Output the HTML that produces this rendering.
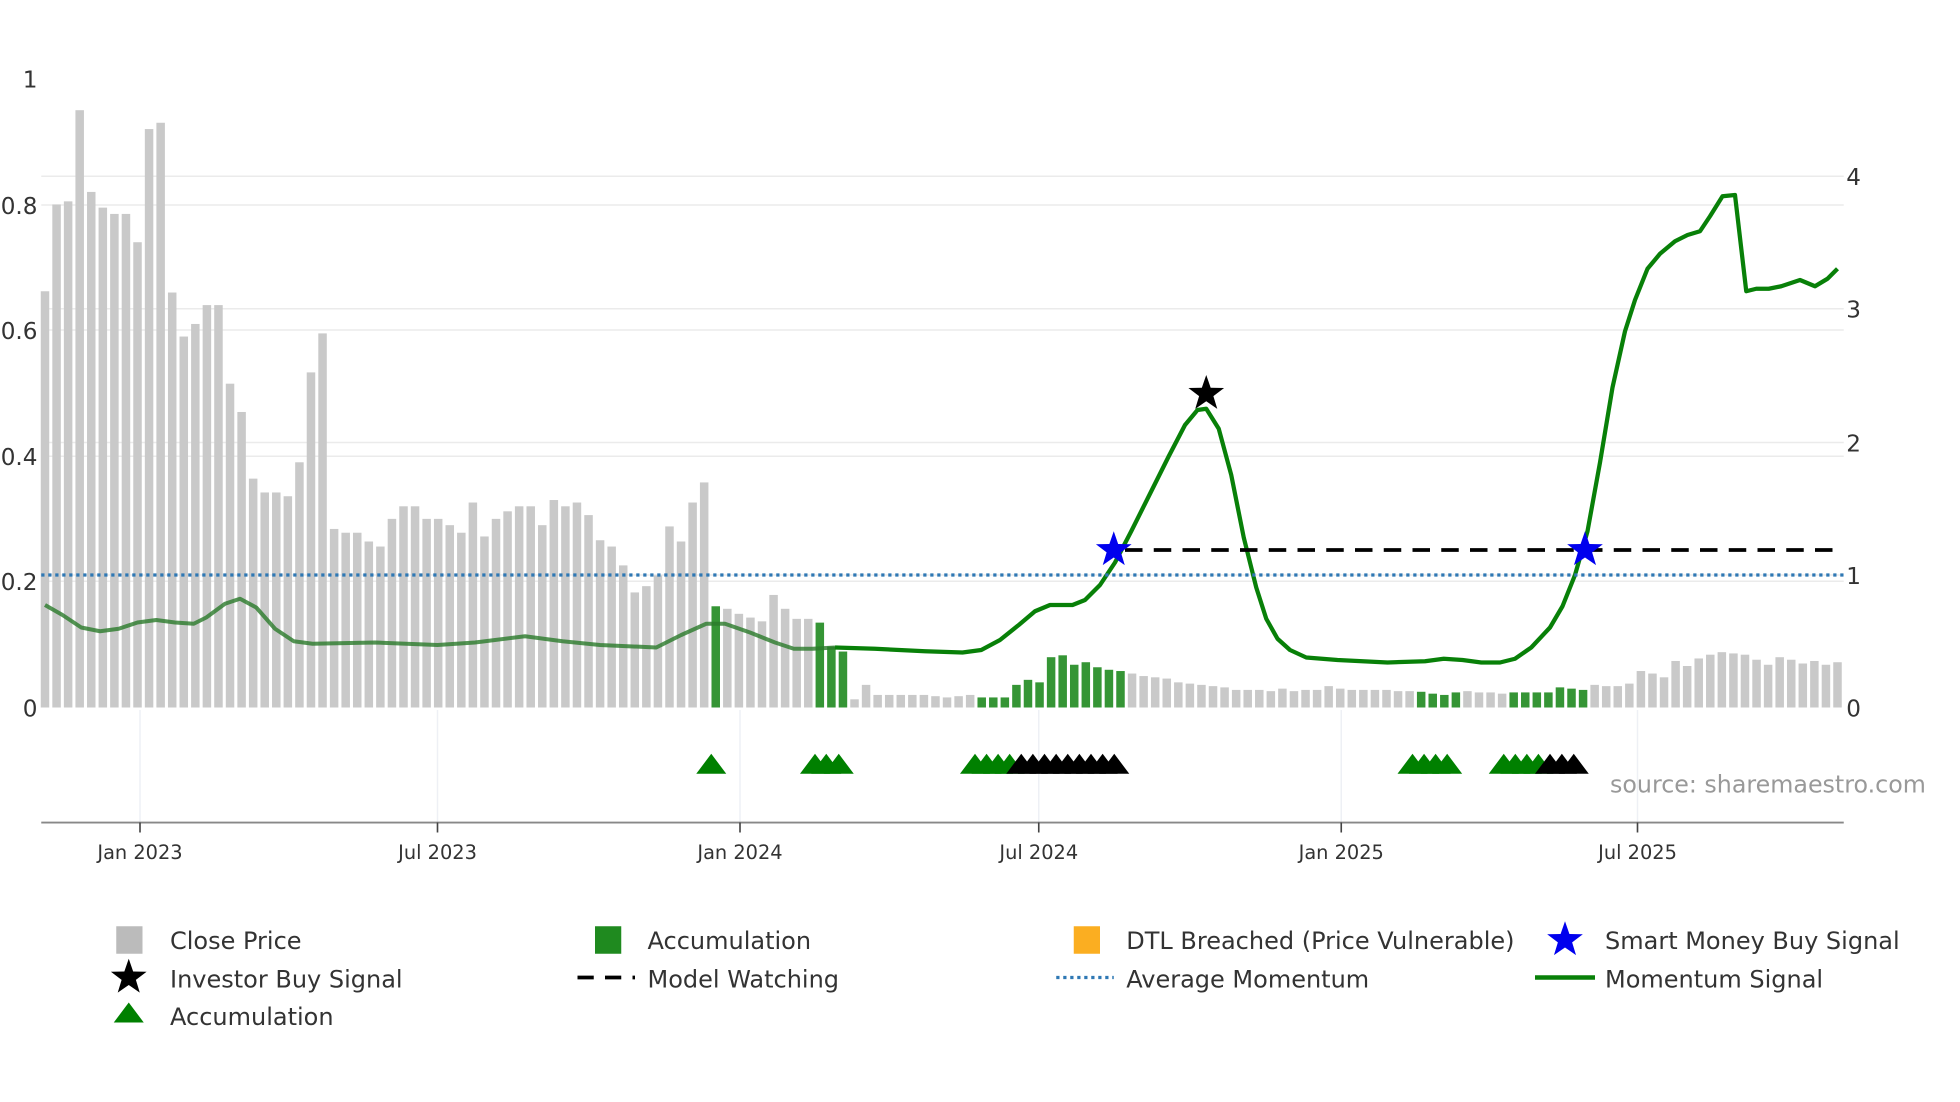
<!DOCTYPE html>
<html><head><meta charset="utf-8"><style>
html,body{margin:0;padding:0;background:#fff;}
svg{display:block;font-family:"DejaVu Sans","Liberation Sans",sans-serif;}
</style></head><body>
<svg id="c" width="1960" height="1102" viewBox="0 0 1568 881.6" xmlns="http://www.w3.org/2000/svg">
<g stroke="#ebebeb" stroke-width="1.2">
<line x1="33" x2="1475" y1="465" y2="465"/><line x1="33" x2="1475" y1="365" y2="365"/>
<line x1="33" x2="1475" y1="264" y2="264"/><line x1="33" x2="1475" y1="164" y2="164"/>
<line x1="33" x2="1475" y1="460" y2="460"/><line x1="33" x2="1475" y1="354" y2="354"/>
<line x1="33" x2="1475" y1="247" y2="247"/><line x1="33" x2="1475" y1="141" y2="141"/>
</g>
<g stroke="#eef0f5" stroke-width="1.2">
<line x1="112" x2="112" y1="568" y2="658"/><line x1="350" x2="350" y1="568" y2="658"/>
<line x1="592" x2="592" y1="568" y2="658"/><line x1="831" x2="831" y1="568" y2="658"/>
<line x1="1073" x2="1073" y1="568" y2="658"/><line x1="1310" x2="1310" y1="568" y2="658"/>
</g>
<g id="bars"></g>
<polyline fill="none" stroke="#2a7a2a" stroke-opacity="0.8" stroke-width="3.2" stroke-linejoin="round" points="36,484 50,492 65,502 80,505 95,503 110,498 125,496 140,498 155,499 165,494 180,483 192,479 205,486 220,503 235,513 250,515 300,514 350,516 380,514 420,509 450,513 480,516 525,518 545,508 565,499 580,499 600,506 620,514 635,519 650,519 668,518"/>
<polyline fill="none" stroke="#088008" stroke-width="3.4" stroke-linejoin="round" points="668,518 700,519 740,521 770,522 785,520 800,512 815,500 828,489 840,484 858,484 868,480 880,468 892,450 905,425 920,395 935,365 948,340 958,328 965,327 975,343 985,380 995,430 1005,470 1013,495 1022,511 1032,520 1045,526 1070,528 1110,530 1140,529 1155,527 1170,528 1185,530 1200,530 1212,527 1225,518 1240,502 1250,485 1260,460 1270,425 1280,370 1290,310 1300,265 1308,240 1318,215 1328,203 1340,193 1350,188 1360,185 1368,173 1378,157 1388,156 1397,233 1405,231 1415,231 1425,229 1440,224 1452,229 1462,223 1470,215"/>
<line x1="33" x2="1475" y1="460" y2="460" stroke="#2f78b4" stroke-width="2.6" stroke-dasharray="2.6,3"/>
<line x1="900" x2="1472" y1="440" y2="440" stroke="#000" stroke-width="3" stroke-dasharray="14,9"/>
<g id="stars"></g>
<g id="tri"></g>
<line x1="33" x2="1475" y1="658" y2="658" stroke="#888" stroke-width="1.5"/>
<g stroke="#444" stroke-width="1.3">
<line x1="112" x2="112" y1="658" y2="666"/><line x1="350" x2="350" y1="658" y2="666"/>
<line x1="592" x2="592" y1="658" y2="666"/><line x1="831" x2="831" y1="658" y2="666"/>
<line x1="1073" x2="1073" y1="658" y2="666"/><line x1="1310" x2="1310" y1="658" y2="666"/>
</g>
<g font-size="15.5" fill="#333" text-anchor="middle">
<text x="112" y="687">Jan 2023</text><text x="350" y="687">Jul 2023</text>
<text x="592" y="687">Jan 2024</text><text x="831" y="687">Jul 2024</text>
<text x="1073" y="687">Jan 2025</text><text x="1310" y="687">Jul 2025</text>
</g>
<g font-size="18.5" fill="#333" text-anchor="end">
<text x="30" y="70">1</text><text x="30" y="171">0.8</text><text x="30" y="271">0.6</text>
<text x="30" y="372">0.4</text><text x="30" y="472">0.2</text><text x="30" y="573">0</text>
</g>
<g font-size="18.5" fill="#333">
<text x="1477" y="148">4</text><text x="1477" y="254">3</text><text x="1477" y="361">2</text>
<text x="1477" y="467">1</text><text x="1477" y="573">0</text>
</g>
<text x="1288" y="634" font-size="19" fill="#999">source: sharemaestro.com</text>
<g font-size="19.2" fill="#333">
<rect x="93" y="741" width="21" height="22" fill="#bbb"/><text x="136" y="759">Close Price</text>
<rect x="476" y="741" width="21" height="22" fill="#1f8a1f"/><text x="518" y="759">Accumulation</text>
<rect x="859" y="741" width="21" height="22" fill="#fbae21"/><text x="901" y="759">DTL Breached (Price Vulnerable)</text>
<text x="1284" y="759">Smart Money Buy Signal</text>
<text x="136" y="790">Investor Buy Signal</text>
<line x1="462" x2="508" y1="782" y2="782" stroke="#000" stroke-width="3" stroke-dasharray="13,9"/><text x="518" y="790">Model Watching</text>
<line x1="845" x2="891" y1="782" y2="782" stroke="#2f78b4" stroke-width="2.6" stroke-dasharray="2.6,3"/><text x="901" y="790">Average Momentum</text>
<line x1="1228" x2="1276" y1="782" y2="782" stroke="#088008" stroke-width="3.6"/><text x="1284" y="790">Momentum Signal</text>
<polygon points="91,818 103,802 115,818" fill="#008000"/><text x="136" y="820">Accumulation</text>
</g>
</svg>
<script>
var NS="http://www.w3.org/2000/svg";
function el(t,a,p){var e=document.createElementNS(NS,t);for(var k in a)e.setAttribute(k,a[k]);document.getElementById(p).appendChild(e);return e;}
var v=[0.662,0.80,0.805,0.95,0.82,0.795,0.785,0.785,0.74,0.92,0.93,0.66,0.59,0.61,0.64,0.64,0.515,0.47,0.364,0.342,0.342,0.336,0.39,0.533,0.595,0.284,0.278,0.278,0.264,0.256,0.3,0.32,0.32,0.3,0.3,0.29,0.278,0.326,0.272,0.3,0.312,0.32,0.32,0.29,0.33,0.32,0.326,0.306,0.266,0.256,0.226,0.183,0.193,0.21,0.288,0.264,0.326,0.358,
0.161,0.157,0.149,0.143,0.137,0.179,0.157,0.141,0.141,0.135,0.097,0.089,0.013,0.036,0.02,0.02,0.02,0.02,0.02,0.018,0.016,0.018,0.02,
0.016,0.016,0.016,0.036,0.044,0.04,0.08,0.083,0.068,0.072,0.064,0.06,0.058,
0.054,0.05,0.048,0.046,0.04,0.038,0.036,0.034,0.032,0.028,0.028,0.028,0.026,0.03,0.026,0.028,0.028,0.034,0.03,0.028,0.028,0.028,0.028,0.026,0.026,
0.025,0.022,0.02,0.024,0.026,0.024,0.024,0.022,0.024,0.024,0.024,0.024,0.032,0.03,0.028,
0.036,0.034,0.034,0.038,0.058,0.054,0.048,0.074,0.066,0.078,0.084,0.088,0.086,0.084,0.076,0.068,0.08,0.076,0.07,0.074,0.068,0.072];
var green={58:1,67:1,68:1,69:1};
for(var i=81;i<=93;i++)green[i]=1;
for(var i=119;i<=122;i++)green[i]=1;
for(var i=127;i<=133;i++)green[i]=1;
var step=(1470-36)/(v.length-1),x0=36;
for(var i=0;i<v.length;i++){var x=x0+i*step,h=v[i]*503;
el("rect",{x:(x-3.4).toFixed(2),y:(566-h).toFixed(2),width:6.8,height:h.toFixed(2),fill:green[i]?"#2a8f2a":"#c9c9c9","fill-opacity":green[i]?0.95:1},"bars");}
function tri(x,c){el("polygon",{points:(x-12)+",619 "+x+",603 "+(x+12)+",619",fill:c},"tri");}
tri(569,"#008000");
[652,661,671].forEach(function(x){tri(x,"#008000")});
for(var x=780;x<=808;x+=9.24)tri(x,"#008000");
for(var x=817;x<=892;x+=9.3)tri(x,"#000");
for(var x=1130;x<=1158;x+=9.24)tri(x,"#008000");
for(var x=1203;x<=1231;x+=9.24)tri(x,"#008000");
for(var x=1240;x<=1260;x+=9.5)tri(x,"#000");
function star(cx,cy,r,c,p){var pts=[];for(var k=0;k<10;k++){var a=-Math.PI/2+k*Math.PI/5,rr=k%2?r*0.4:r;pts.push((cx+rr*Math.cos(a)).toFixed(2)+","+(cy+rr*Math.sin(a)).toFixed(2));}
el("polygon",{points:pts.join(" "),fill:c},p);}
star(891,440,15,"#0000ee","stars");star(1268,440,15,"#0000ee","stars");star(965,315,15,"#000","stars");
star(1252,752,15,"#0000ee","c");star(103,782,15,"#000","c");
</script>
</body></html>
